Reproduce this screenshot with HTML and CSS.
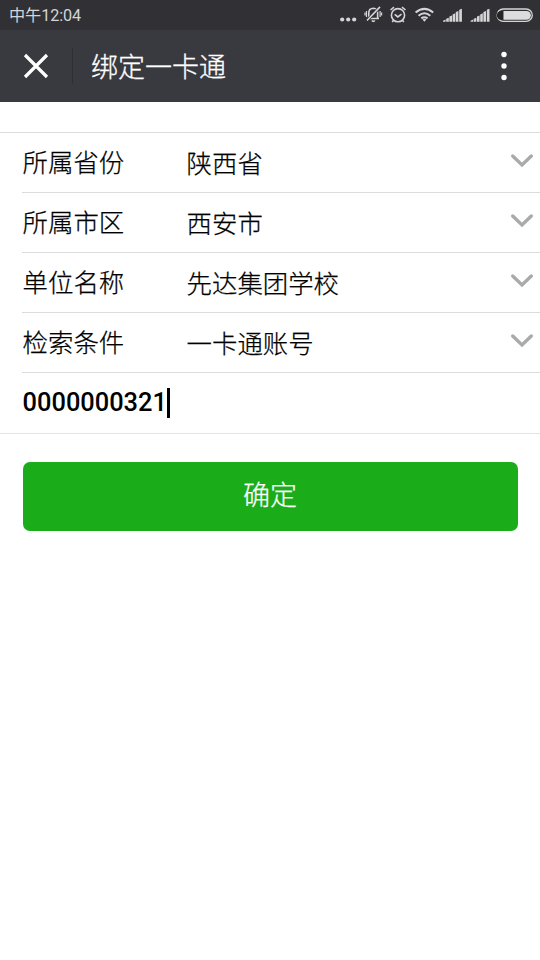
FILE: index.html
```html
<!DOCTYPE html>
<html lang="zh-CN">
<head>
<meta charset="utf-8">
<title>绑定一卡通</title>
<link rel="stylesheet" href="styles.css">
</head>
<body>
<div class="status">
  <span class="time">中午12:04</span>
  <svg class="status-icons" width="210" height="30" viewBox="330 0 210 30" fill="none" stroke="#d5d5d7">
    <g fill="#d5d5d7" stroke="none"><circle cx="342.2" cy="19.5" r="2.1"/><circle cx="348.2" cy="19.5" r="2.1"/><circle cx="354.2" cy="19.5" r="2.1"/></g>
    <g stroke-width="1.6">
      <path d="M367.5 18.5H379M368.8 18V12.5Q369 8.5 373.3 8.3Q377.6 8.5 377.6 12.5V18.5M371.8 20.5Q373.3 22.2 374.8 20.5"/>
      <path d="M366.5 11v6M380.1 11v6M365 12.5v3M381.6 12.5v3" stroke-width="1.2"/>
      <path d="M367 20.5L380 6.9" stroke="#303035" stroke-width="3"/>
      <path d="M367 20.5L380 6.9"/>
    </g>
    <g stroke-width="1.6"><circle cx="398" cy="15.2" r="6.6"/><path d="M394.7 14.3L397.8 16.9L401.5 14.2M390.5 10L394 7.2M405.5 10L402 7.2M393.6 20.3L392.2 22M402.4 20.3L403.8 22"/></g>
    <g stroke-width="2"><path d="M415.6 12.6Q424.4 5.2 433.2 12.6M418.5 15.7Q424.4 10.8 430.3 15.7M421.3 18.4Q424.4 16 427.5 18.4"/><path d="M422.5 19.5Q424.4 18 426.3 19.5L424.4 21.8Z" fill="#d5d5d7" stroke="none"/></g>
    <g fill="#d5d5d7" stroke="none">
      <path id="signal" d="M443 21.8v-1l2.6-1.2v2.2zM446.2 21.8v-3l2.6-1v4zM449.4 21.8v-5.2l2.6-1v6.2zM452.6 21.8v-7.4l2.6-1.1v8.5zM455.8 21.8v-9.8l2.6-1.1v10.9zM459.2 21.8v-12l2.7-1v13z"/>
      <use href="#signal" x="27.6"/>
    </g>
    <rect x="497.1" y="9" width="35.2" height="12.4" rx="6.2" stroke-width="1.3"/>
    <path d="M503.5 10.9H526.5A4.4 4.4 0 0 1 526.5 19.7H503.5Z" fill="#dcdcde" stroke="none"/>
    <path d="M502.8 10.9h-1.6a4.4 4.4 0 0 0 0 8.8h1.6z" fill="#252528" stroke="none"/>
  </svg>
</div>
<header class="bar">
  <svg class="close" width="26" height="26" viewBox="0 0 26 26"><path d="M2 2L24 24M24 2L2 24" stroke="#fff" stroke-width="3.2"/></svg>
  <span class="divider"></span>
  <h1 class="title">绑定一卡通</h1>
  <svg class="more" width="8" height="32" viewBox="0 0 8 32" fill="#fff"><circle cx="4" cy="4.5" r="2.7"/><circle cx="4" cy="16" r="2.7"/><circle cx="4" cy="27.5" r="2.7"/></svg>
</header>
<main class="form">
  <div class="row"><span class="label">所属省份</span><span class="value">陕西省</span><svg class="chevron" width="24" height="16" viewBox="0 0 24 16"><path d="M2.7 3L12 12L21.3 3"/></svg></div>
  <div class="row"><span class="label">所属市区</span><span class="value">西安市</span><svg class="chevron" width="24" height="16" viewBox="0 0 24 16"><path d="M2.7 3L12 12L21.3 3"/></svg></div>
  <div class="row"><span class="label">单位名称</span><span class="value">先达集团学校</span><svg class="chevron" width="24" height="16" viewBox="0 0 24 16"><path d="M2.7 3L12 12L21.3 3"/></svg></div>
  <div class="row"><span class="label">检索条件</span><span class="value">一卡通账号</span><svg class="chevron" width="24" height="16" viewBox="0 0 24 16"><path d="M2.7 3L12 12L21.3 3"/></svg></div>
  <div class="row account"><span class="number">0000000321</span><span class="caret"></span></div>
</main>
<button class="submit">确定</button>
</body>
</html>
```
FILE: styles.css
```css
* { box-sizing: border-box; }
body {
  margin: 0;
  min-height: 960px;
  background: #fff;
  color: #000;
  font-family: Roboto, "Noto Sans CJK SC", sans-serif;
}
.status {
  display: flex;
  justify-content: space-between;
  height: 30px;
  background: #303035;
  color: #d5d5d7;
}
.time {
  padding-left: 9px;
  font-size: 16.2px;
  line-height: 31px;
  letter-spacing: -0.1px;
}
.bar {
  display: flex;
  align-items: center;
  height: 72px;
  padding: 0 32px 0 23px;
  background: #393a3f;
}
.divider {
  width: 1px;
  height: 36px;
  margin: 0 18px 0 23px;
  background: #2e2f33;
}
.title {
  flex: 1;
  margin: 0;
  padding-top: 5px;
  color: #fff;
  font-size: 27px;
  font-weight: 300;
  line-height: 67px;
  -webkit-text-stroke: 0.3px;
}
.form {
  margin-top: 30px;
  padding-left: 22px;
  border-top: 1px solid #dcdcdc;
  border-bottom: 1px solid #e4e4e4;
}
.row {
  display: flex;
  align-items: center;
  height: 60px;
  padding-right: 6px;
  border-bottom: 1px solid #dcdcdc;
  font-size: 25.4px;
  font-weight: 300;
  line-height: 58px;
  -webkit-text-stroke: 0.25px;
}
.label { width: 164px; padding-left: 0.6px; }
.value { flex: 1; padding: 2px 0 0 0.6px; }
.chevron {
  margin-top: -4px;
  fill: none;
  stroke: #aaa;
  stroke-width: 3.4;
  stroke-linecap: round;
}
.account {
  padding-bottom: 2px;
  border-bottom: 0;
  font-weight: 500;
  -webkit-text-stroke: 0;
}
.number { padding-left: 0.6px; }
.caret { width: 3px; height: 30px; margin: 2px 0 0 -0.2px; background: #000; }
.submit {
  display: block;
  width: 495px;
  height: 69px;
  margin: 28px 0 0 22.5px;
  padding: 0 0 2px;
  border: 0;
  border-radius: 7px;
  background: #1aad19;
  color: #fff;
  font: 300 27px/66px Roboto, "Noto Sans CJK SC", sans-serif;
  -webkit-text-stroke: 0.25px;
}
```
